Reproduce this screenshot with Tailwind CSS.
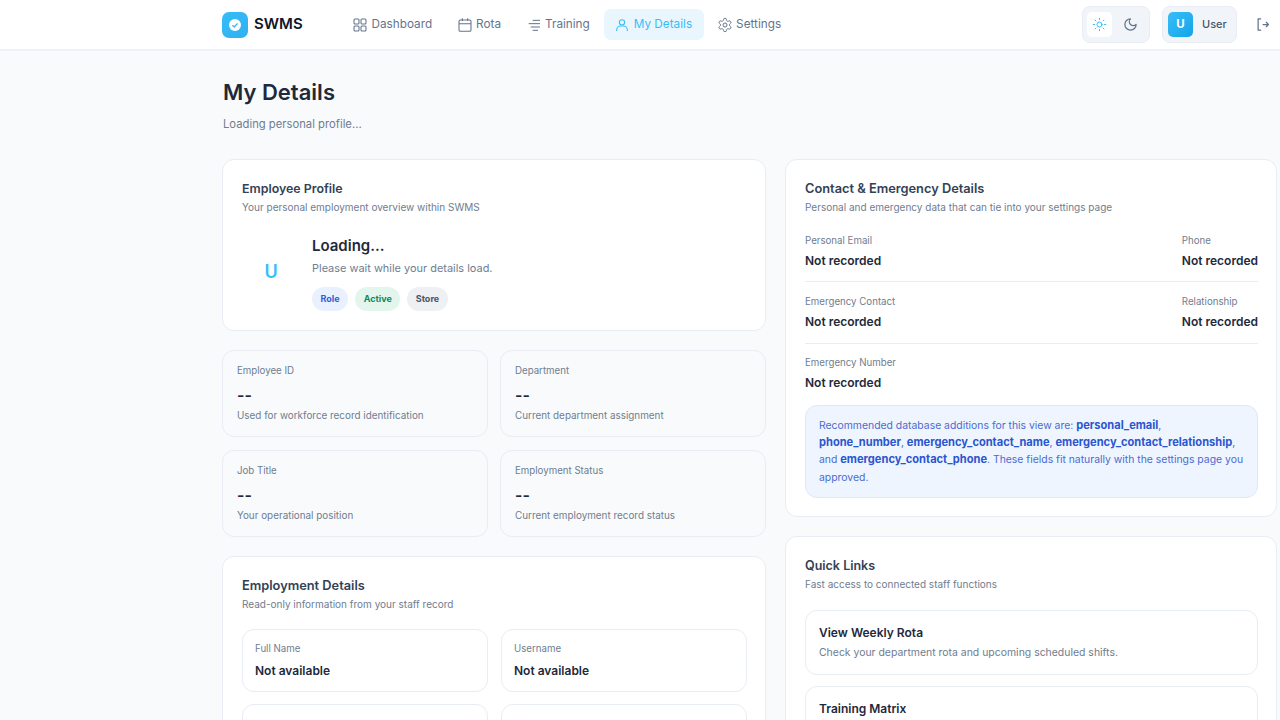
<!DOCTYPE html>
<html lang="en">
<head>
  <meta charset="UTF-8" />
  <title>SWMS - My Details</title>
  <script src="https://cdn.jsdelivr.net/npm/@tailwindcss/browser@4"></script>
</head>
<body class="bg-[#f8fafc] h-[720px] overflow-hidden font-['Inter','Noto_Sans',sans-serif] text-[#1e293b]">
  <!-- top nav -->
  <header class="h-[51px] bg-white border-b-2 border-[#eef1f5] pl-[222px] flex items-center">
    <div class="flex items-center gap-[6px] w-[120px]">
      <div class="w-[26px] h-[26px] rounded-[7px] bg-gradient-to-br from-[#38bdf8] to-[#2fb0f2] flex items-center justify-center">
        <svg class="w-[14px] h-[14px]" viewBox="0 0 14 14"><circle cx="7" cy="7" r="6" fill="#fff"/><path d="M4.4 7.2l1.8 1.8 3.4-3.6" fill="none" stroke="#38bdf8" stroke-width="1.4"/></svg>
      </div>
      <span class="text-[15px] font-semibold text-[#0f172a]">SWMS</span>
    </div>
    <nav class="flex items-center gap-[2.5px] text-[11.75px] text-[#64748b]">
      <a class="h-[31px] pl-[10px] pr-[12px] rounded-[7px] flex items-center gap-[3.5px]">
        <svg class="w-[16px] h-[16px]" viewBox="0 0 24 24" fill="none" stroke="currentColor" stroke-width="1.6"><rect x="3" y="3" width="7.5" height="7.5" rx="1.5"/><rect x="13.5" y="3" width="7.5" height="7.5" rx="1.5"/><rect x="3" y="13.5" width="7.5" height="7.5" rx="1.5"/><rect x="13.5" y="13.5" width="7.5" height="7.5" rx="1.5"/></svg>
        <span class="mt-[1px]">Dashboard</span>
      </a>
      <a class="h-[31px] pl-[10px] pr-[12px] rounded-[7px] flex items-center gap-[3.5px]">
        <svg class="w-[16px] h-[16px]" viewBox="0 0 24 24" fill="none" stroke="currentColor" stroke-width="1.6"><rect x="3" y="4.5" width="18" height="17" rx="2"/><path d="M3 10h18M8 2v4M16 2v4"/></svg>
        <span class="mt-[1px]">Rota</span>
      </a>
      <a class="h-[31px] pl-[10px] pr-[12px] rounded-[7px] flex items-center gap-[3.5px]">
        <svg class="w-[16px] h-[16px]" viewBox="0 0 24 24" fill="none" stroke="currentColor" stroke-width="1.5"><path d="M10 5h11M4 10h17M7 15h14M10 20h8"/></svg>
        <span class="mt-[1px]">Training</span>
      </a>
      <a class="h-[31px] pl-[10px] pr-[12px] rounded-[7px] flex items-center gap-[3.5px] bg-[#e9f6fe] text-[#38bdf8]">
        <svg class="w-[16px] h-[16px]" viewBox="0 0 24 24" fill="none" stroke="currentColor" stroke-width="1.6"><circle cx="12" cy="8" r="4"/><path d="M4 21v-1.5a6 6 0 0 1 6-6h4a6 6 0 0 1 6 6V21"/></svg>
        <span class="mt-[1px]">My Details</span>
      </a>
      <a class="h-[31px] pl-[10px] pr-[12px] rounded-[7px] flex items-center gap-[3.5px]">
        <svg class="w-[16px] h-[16px]" viewBox="0 0 24 24" fill="none" stroke="currentColor" stroke-width="1.5"><circle cx="12" cy="12" r="3"/><path d="M12.2 2h-.4a2 2 0 0 0-2 2v.2a2 2 0 0 1-1 1.7l-.4.3a2 2 0 0 1-2 0l-.2-.1a2 2 0 0 0-2.7.7l-.2.4a2 2 0 0 0 .7 2.7l.2.1a2 2 0 0 1 1 1.7v.5a2 2 0 0 1-1 1.8l-.2.1a2 2 0 0 0-.7 2.7l.2.4a2 2 0 0 0 2.7.7l.2-.1a2 2 0 0 1 2 0l.4.3a2 2 0 0 1 1 1.7v.2a2 2 0 0 0 2 2h.4a2 2 0 0 0 2-2v-.2a2 2 0 0 1 1-1.7l.4-.3a2 2 0 0 1 2 0l.2.1a2 2 0 0 0 2.7-.7l.2-.4a2 2 0 0 0-.7-2.7l-.2-.1a2 2 0 0 1-1-1.8v-.5a2 2 0 0 1 1-1.7l.2-.1a2 2 0 0 0 .7-2.7l-.2-.4a2 2 0 0 0-2.7-.7l-.2.1a2 2 0 0 1-2 0l-.4-.3a2 2 0 0 1-1-1.7V4a2 2 0 0 0-2-2z"/></svg>
        <span class="mt-[1px]">Settings</span>
      </a>
    </nav>
    <div class="ml-auto mr-[10px] flex items-center">
      <div class="w-[68px] h-[37px] rounded-[8px] bg-[#f1f5f9] border border-[#e8edf3] flex items-center pl-[4px] gap-[10px]">
        <span class="w-[25px] h-[25px] rounded-[5px] bg-white flex items-center justify-center text-[#38bdf8]">
          <svg class="w-[15px] h-[15px]" viewBox="0 0 24 24" fill="none" stroke="currentColor" stroke-width="1.6" stroke-linecap="round"><circle cx="12" cy="12" r="4"/><path d="M12 2v2M12 20v2M4.9 4.9l1.4 1.4M17.7 17.7l1.4 1.4M2 12h2M20 12h2M6.3 17.7l-1.4 1.4M19.1 4.9l-1.4 1.4"/></svg>
        </span>
        <svg class="w-[15px] h-[15px] text-[#64748b] ml-[1px]" viewBox="0 0 24 24" fill="none" stroke="currentColor" stroke-width="2" stroke-linecap="round" stroke-linejoin="round"><path d="M12 3a6 6 0 0 0 9 9 9 9 0 1 1-9-9z"/></svg>
      </div>
      <div class="ml-[12px] w-[75px] h-[37px] rounded-[8px] bg-[#f1f5f9] border border-[#e8edf3] flex items-center pl-[5px]">
        <span class="w-[25px] h-[25px] rounded-[5px] bg-gradient-to-br from-[#38bdf8] to-[#0ea5e9] flex items-center justify-center text-white text-[11.5px] font-bold">U</span>
        <span class="ml-[9px] text-[11px] font-medium text-[#475569]">User</span>
      </div>
      <svg class="w-[15px] h-[15px] ml-[18px] text-[#64748b]" viewBox="0 0 24 24" fill="none" stroke="currentColor" stroke-width="2" stroke-linecap="round" stroke-linejoin="round"><path d="M9 3H5v18h4M13 12h8M18 8.5l3.5 3.5-3.5 3.5"/></svg>
    </div>
  </header>

  <main class="pl-[222px] w-[1277px] pt-[25px]">
    <h1 class="ml-px text-[22px] leading-[32px] font-semibold text-[#1e293b]">My Details</h1>
    <p class="ml-px mt-[7px] text-[11.25px] leading-[18px] text-[#6f7d90]">Loading personal profile...</p>

    <div class="mt-[26px] grid grid-cols-[544px_492px] gap-x-[19px]">
      <!-- left column -->
      <div class="flex flex-col gap-[19px]">
        <section class="h-[172px] bg-white rounded-[12px] border border-[#e8edf3] px-[19px] pt-[20px]">
          <h2 class="text-[12.4px] leading-[18px] font-semibold text-[#334155]">Employee Profile</h2>
          <p class="mt-[1px] text-[10px] leading-[16px] text-[#6f7d90]">Your personal employment overview within SWMS</p>
          <div class="flex mt-[19px]">
            <div class="w-[70px] h-[74px] pr-[12px] flex items-center justify-center text-[#38bdf8] text-[18px] font-semibold">U</div>
            <div>
              <div class="text-[15px] leading-[24px] font-semibold text-[#1e293b]">Loading...</div>
              <p class="mt-[1px] text-[10.95px] leading-[18px] text-[#6f7d90]">Please wait while your details load.</p>
              <div class="flex gap-[7px] mt-[10px] text-[9px] font-bold">
                <span class="h-[24px] px-[8.5px] rounded-full bg-[#e9f0fe] text-[#2f5fd8] flex items-center">Role</span>
                <span class="h-[24px] px-[8.5px] rounded-full bg-[#e2f6ee] text-[#0f8a5f] flex items-center">Active</span>
                <span class="h-[24px] px-[8.5px] rounded-full bg-[#eef0f3] text-[#475569] flex items-center">Store</span>
              </div>
            </div>
          </div>
        </section>

        <div class="grid grid-cols-2 gap-x-[12px] gap-y-[13px]">
          <div class="h-[87px] rounded-[12px] border border-[#e8edf3] bg-[#f8fafc] px-[14px] pt-[12px]">
            <p class="text-[9.7px] leading-[15px] text-[#6f7d90]">Employee ID</p>
            <p class="mt-[7px] text-[16px] leading-[20px] font-semibold text-[#1e293b]">--</p>
            <p class="mt-[3px] text-[9.9px] leading-[15px] text-[#6f7d90]">Used for workforce record identification</p>
          </div>
          <div class="h-[87px] rounded-[12px] border border-[#e8edf3] bg-[#f8fafc] px-[14px] pt-[12px]">
            <p class="text-[9.7px] leading-[15px] text-[#6f7d90]">Department</p>
            <p class="mt-[7px] text-[16px] leading-[20px] font-semibold text-[#1e293b]">--</p>
            <p class="mt-[3px] text-[9.9px] leading-[15px] text-[#6f7d90]">Current department assignment</p>
          </div>
          <div class="h-[87px] rounded-[12px] border border-[#e8edf3] bg-[#f8fafc] px-[14px] pt-[12px]">
            <p class="text-[9.7px] leading-[15px] text-[#6f7d90]">Job Title</p>
            <p class="mt-[7px] text-[16px] leading-[20px] font-semibold text-[#1e293b]">--</p>
            <p class="mt-[3px] text-[9.9px] leading-[15px] text-[#6f7d90]">Your operational position</p>
          </div>
          <div class="h-[87px] rounded-[12px] border border-[#e8edf3] bg-[#f8fafc] px-[14px] pt-[12px]">
            <p class="text-[9.7px] leading-[15px] text-[#6f7d90]">Employment Status</p>
            <p class="mt-[7px] text-[16px] leading-[20px] font-semibold text-[#1e293b]">--</p>
            <p class="mt-[3px] text-[9.9px] leading-[15px] text-[#6f7d90]">Current employment record status</p>
          </div>
        </div>

        <section class="bg-white rounded-[12px] border border-[#e8edf3] pl-[19px] pr-[18px] pt-[20px] pb-[20px]">
          <h2 class="text-[12.8px] leading-[18px] font-semibold text-[#334155]">Employment Details</h2>
          <p class="mt-[1px] text-[10px] leading-[16px] text-[#6f7d90]">Read-only information from your staff record</p>
          <div class="grid grid-cols-2 gap-x-[13px] gap-y-[12px] mt-[17px]">
            <div class="h-[63px] rounded-[12px] border border-[#e8edf3] px-[12px] pt-[11px]">
              <p class="text-[9.7px] leading-[15px] text-[#6f7d90]">Full Name</p>
              <p class="mt-[6px] text-[12px] leading-[18px] font-semibold text-[#1e293b]">Not available</p>
            </div>
            <div class="h-[63px] rounded-[12px] border border-[#e8edf3] px-[12px] pt-[11px]">
              <p class="text-[9.7px] leading-[15px] text-[#6f7d90]">Username</p>
              <p class="mt-[6px] text-[12px] leading-[18px] font-semibold text-[#1e293b]">Not available</p>
            </div>
            <div class="h-[63px] rounded-[12px] border border-[#e8edf3] px-[12px] pt-[11px]"></div>
            <div class="h-[63px] rounded-[12px] border border-[#e8edf3] px-[12px] pt-[11px]"></div>
          </div>
        </section>
      </div>

      <!-- right column -->
      <div class="flex flex-col gap-[19px]">
        <section class="h-[358px] bg-white rounded-[12px] border border-[#e8edf3] pl-[19px] pr-[18px] pt-[20px]">
          <h2 class="text-[12.8px] leading-[18px] font-semibold text-[#334155]">Contact &amp; Emergency Details</h2>
          <p class="mt-[1px] text-[10px] leading-[16px] text-[#6f7d90]">Personal and emergency data that can tie into your settings page</p>
          <div class="mt-[18px] flex justify-between h-[49px] border-b border-[#e8edf3]">
            <div>
              <p class="text-[9.7px] leading-[15px] text-[#6f7d90]">Personal Email</p>
              <p class="mt-[4px] text-[12px] leading-[18px] font-semibold text-[#1e293b]">Not recorded</p>
            </div>
            <div>
              <p class="text-[9.7px] leading-[15px] text-[#6f7d90]">Phone</p>
              <p class="mt-[4px] text-[12px] leading-[18px] font-semibold text-[#1e293b]">Not recorded</p>
            </div>
          </div>
          <div class="mt-[12px] flex justify-between h-[50px] border-b border-[#e8edf3]">
            <div>
              <p class="text-[9.7px] leading-[15px] text-[#6f7d90]">Emergency Contact</p>
              <p class="mt-[4px] text-[12px] leading-[18px] font-semibold text-[#1e293b]">Not recorded</p>
            </div>
            <div>
              <p class="text-[9.7px] leading-[15px] text-[#6f7d90]">Relationship</p>
              <p class="mt-[4px] text-[12px] leading-[18px] font-semibold text-[#1e293b]">Not recorded</p>
            </div>
          </div>
          <div class="mt-[11px] h-[37px]">
            <p class="text-[9.7px] leading-[15px] text-[#6f7d90]">Emergency Number</p>
            <p class="mt-[4px] text-[12px] leading-[18px] font-semibold text-[#1e293b]">Not recorded</p>
          </div>
          <div class="mt-[13px] h-[93px] rounded-[12px] border border-[#dde8f8] bg-[#eff5fe] pl-[13px] pr-[12px] pt-[11px] text-[10.4px] leading-[17.2px] text-[#4a6bd0]">
            Recommended database additions for this view are: <b class="text-[11.1px] font-bold text-[#2a56d0]">personal_email</b>, <b class="text-[11.1px] font-bold text-[#2a56d0]">phone_number</b>, <b class="text-[11.1px] font-bold text-[#2a56d0]">emergency_contact_name</b>, <b class="text-[11.1px] font-bold text-[#2a56d0]">emergency_contact_relationship</b>, and <b class="text-[11.1px] font-bold text-[#2a56d0]">emergency_contact_phone</b>. These fields fit naturally with the settings page you approved.
          </div>
        </section>

        <section class="bg-white rounded-[12px] border border-[#e8edf3] pl-[19px] pr-[18px] pt-[20px] pb-[20px]">
          <h2 class="text-[12.5px] leading-[18px] font-semibold text-[#334155]">Quick Links</h2>
          <p class="mt-[1px] text-[10px] leading-[16px] text-[#6f7d90]">Fast access to connected staff functions</p>
          <div class="mt-[18px] flex flex-col gap-[11px]">
            <div class="h-[65px] rounded-[12px] border border-[#e8edf3] px-[13px] pt-[13px]">
              <p class="text-[12px] leading-[18px] font-semibold text-[#1e293b]">View Weekly Rota</p>
              <p class="mt-[3px] text-[10.45px] leading-[16px] text-[#6f7d90]">Check your department rota and upcoming scheduled shifts.</p>
            </div>
            <div class="h-[65px] rounded-[12px] border border-[#e8edf3] px-[13px] pt-[13px]">
              <p class="text-[12px] leading-[18px] font-semibold text-[#1e293b]">Training Matrix</p>
            </div>
          </div>
        </section>
      </div>
    </div>
  </main>
</body>
</html>
